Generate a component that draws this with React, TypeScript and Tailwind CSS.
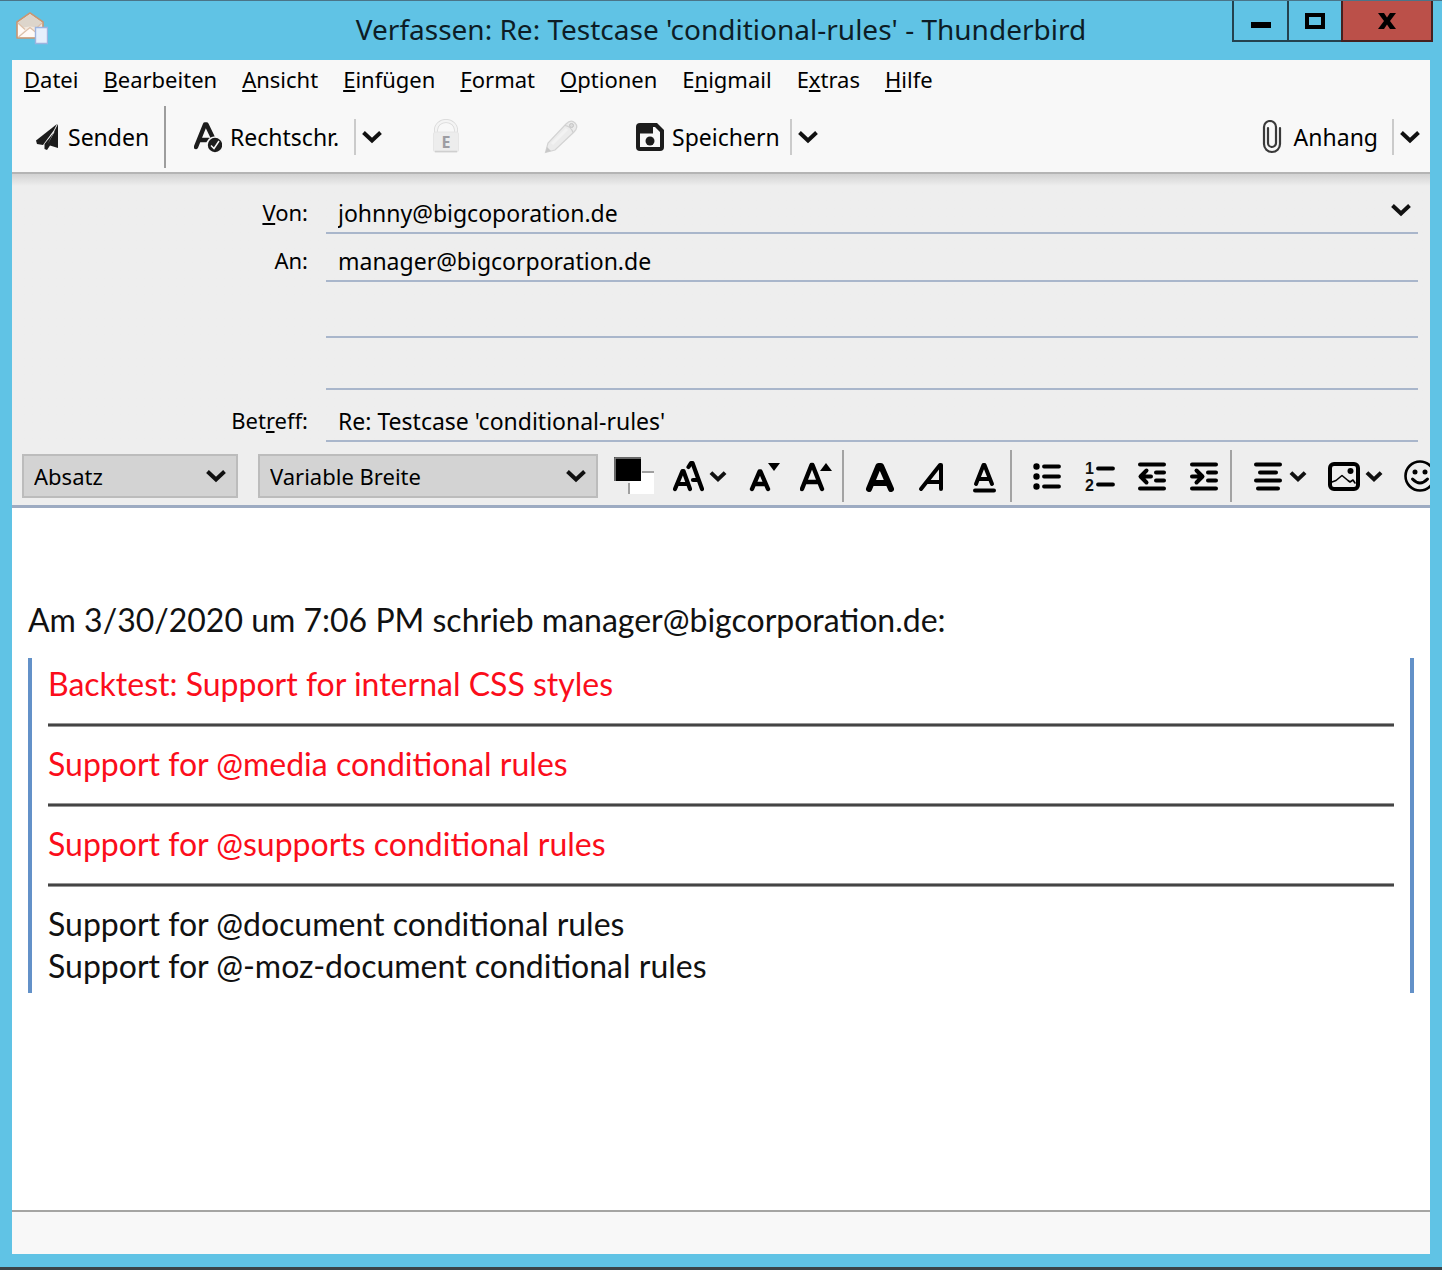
import type { ReactNode } from "react";

const uiFont = "font-['Noto_Sans','Open_Sans',sans-serif]";

function Chevron({ small = false }: { small?: boolean }) {
  return (
    <svg
      viewBox={small ? "-2 -2 24 19" : "0 0 20 16"}
      className="h-4 w-5 shrink-0"
      fill="none"
      stroke="#111"
      strokeWidth={small ? 4.8 : 4}
      aria-hidden="true"
    >
      <path d="M1.500 3.500 10 11.500 18.500 3.500" />
    </svg>
  );
}

function Glyph({ children, label }: { children: ReactNode; label: string }) {
  return (
    <button type="button" aria-label={label} className="flex shrink-0 items-center gap-1">
      {children}
    </button>
  );
}

function Pic({ children }: { children: ReactNode }) {
  return (
    <svg
      viewBox="0 0 32 36"
      className="h-9 w-8 shrink-0"
      fill="none"
      stroke="#000"
      strokeLinecap="round"
      strokeLinejoin="round"
      aria-hidden="true"
    >
      {children}
    </svg>
  );
}

const menus: [string, string, string][] = [
  ["", "D", "atei"],
  ["", "B", "earbeiten"],
  ["", "A", "nsicht"],
  ["", "E", "infügen"],
  ["", "F", "ormat"],
  ["", "O", "ptionen"],
  ["E", "n", "igmail"],
  ["E", "x", "tras"],
  ["", "H", "ilfe"],
];

function Accel({ parts }: { parts: [string, string, string] }) {
  return (
    <>
      {parts[0]}
      <span className="underline decoration-2 underline-offset-2">{parts[1]}</span>
      {parts[2]}
    </>
  );
}

function TitleBar() {
  return (
    <header className="grid h-[60px] grid-cols-[1fr_auto_1fr] border-t border-[#4a7488]">
      <div className="pt-2.5 pl-4">
        <svg viewBox="0 0 32 34" className="h-[34px] w-8" aria-hidden="true">
          <path d="M1 11 14 2l13 9v16H1z" fill="#f3e8de" stroke="#c99672" strokeWidth="1.600" strokeLinejoin="round" />
          <path d="M2 11.500 14 3l12 8.500-5 5-7-1-7 1z" fill="#ddd5cb" />
          <path d="M2 26V13l7 6zM2.500 26 14 17l11 9z" fill="#fffaf6" />
          <path d="M2 12l7 6.500M26 12l-6.500 6M2.500 26 14 16.500l6 5" fill="none" stroke="#dcc0aa" strokeWidth="1.200" />
          <path d="M19.500 16.500h12v16h-12z" fill="#e6effc" stroke="#9db4e0" strokeWidth="1.400" />
        </svg>
      </div>
      <h1 className="pt-[7px] text-[28px] leading-[42px] whitespace-nowrap text-[#0d1d26]">
        Verfassen: Re: Testcase 'conditional-rules' - Thunderbird
      </h1>
      <div className="flex h-[41px] justify-end pr-[9px]">
        <button type="button" aria-label="Minimieren" className="flex w-[57px] items-center justify-center border-2 border-t-0 border-[#24424f]">
          <svg viewBox="0 0 20 16" className="h-4 w-5"><path d="M0 9h20v6H0z" /></svg>
        </button>
        <button type="button" aria-label="Maximieren" className="flex w-[52px] items-center justify-center border-b-2 border-[#24424f]">
          <svg viewBox="0 0 20 16" className="h-4 w-5"><path d="M2 2h16v12H2z" fill="none" stroke="#000" strokeWidth="4" /></svg>
        </button>
        <button type="button" aria-label="Schließen" className="flex w-[92px] items-center justify-center border-2 border-t-0 border-[#45201f] bg-[#bb5049]">
          <svg viewBox="0 0 20 16" className="h-4 w-5"><path d="M1 0h6l3 4.500L13 0h6l-6 8 6 8h-6l-3-4.500L7 16H1l6-8z" /></svg>
        </button>
      </div>
    </header>
  );
}

function Split() {
  return <span className="h-9 w-0.5 shrink-0 bg-[#cbcbcb]" />;
}

function Toolbar() {
  return (
    <div className="flex h-[72px] items-center border-b-2 border-[#b4b4b4] pr-2.5 pl-6 text-[23px] leading-8">
      <button type="button" className="flex w-[128px] items-center gap-2">
        <svg viewBox="0 0 24 28" className="h-7 w-6" fill="#1c1c1c" aria-hidden="true">
          <path d="M21 1 0 17.500 1 21l6 1L18 7z" />
          <path d="M22 1v24l-8-2.500L11 27l-2.500-1V21L19 8l-7.500 13.500z" fillRule="evenodd" />
        </svg>
        Senden
      </button>
      <span className="h-[62px] w-0.5 shrink-0 bg-[#9d9d9d]" />
      <button type="button" className="ml-7 flex w-[154px] items-center gap-2">
        <svg viewBox="0 0 28 32" className="h-8 w-7 shrink-0" fill="none" stroke="#1c1c1c" aria-hidden="true">
          <path d="M2 26 11 3.500h1.500L19 17M6 19h9" strokeWidth="4.400" strokeLinecap="round" strokeLinejoin="round" />
          <circle cx="21" cy="24" r="8" fill="#1c1c1c" stroke="#f8f8f8" strokeWidth="1.600" />
          <path d="m17 24.500 3 3 5-7.500" stroke="#f8f8f8" strokeWidth="1.500" />
        </svg>
        Rechtschr.
      </button>
      <button type="button" aria-label="Sprache wählen" className="ml-1.5 flex items-center gap-1.5">
        <Split />
        <Chevron />
      </button>
      <button type="button" aria-label="Verschlüsseln" disabled className="ml-[50px]">
        <svg viewBox="0 0 28 36" className="h-9 w-7" aria-hidden="true">
          <path d="M4 16V11a10 9 0 0 1 20 0v5" fill="none" stroke="#d8d8d8" strokeWidth="4" />
          <path d="M4 15V11a10 9 0 0 1 20 0v5" fill="none" stroke="#f4f4f4" strokeWidth="2.400" />
          <rect x="1.500" y="13" width="25" height="20" rx="2" fill="#ededed" stroke="#e6e6e6" />
          <path d="M3 32.500h22" stroke="#cfcfcf" strokeWidth="1.500" />
          <text x="14" y="29" textAnchor="middle" fontSize="16" fontWeight="700" fill="#9d9da3" fontFamily="Noto Sans">E</text>
        </svg>
      </button>
      <button type="button" aria-label="Unterschreiben" disabled className="ml-[84px]">
        <svg viewBox="0 0 34 36" className="h-9 w-[34px]" aria-hidden="true">
          <path d="M1.500 33.500 4 24 22 5q5-5 9-1t-1 9L11 31z" fill="#ebebeb" stroke="#d3d3d3" strokeWidth="1.200" />
          <path d="M1.500 33.500 3 28l4 4z" fill="#c8c8c8" />
          <path d="M21 6.500q6 1 8 7" fill="none" stroke="#cfcfcf" strokeWidth="1.200" />
          <circle cx="27.500" cy="6.500" r="2" fill="#dcdcdc" stroke="#c4c4c4" />
          <path d="M8 25 23 10" stroke="#f2f2f2" strokeWidth="3" />
        </svg>
      </button>
      <button type="button" className="ml-[58px] flex w-[148px] items-center gap-2">
        <svg viewBox="0 0 28 28" className="h-7 w-7 shrink-0" aria-hidden="true">
          <path d="M4 0h17l7 7v17q0 4-4 4H4q-4 0-4-4V4q0-4 4-4z" fill="#1c1c1c" />
          <path d="M4 10.500h13V4h2l5 5v15H4z" fill="#f8f8f8" />
          <circle cx="14" cy="18" r="4.500" fill="#1c1c1c" />
        </svg>
        Speichern
      </button>
      <button type="button" aria-label="Speicheroptionen" className="ml-1.5 flex items-center gap-1.5">
        <Split />
        <Chevron />
      </button>
      <button type="button" className="ml-auto flex items-center gap-3">
        <svg viewBox="0 0 20 34" className="h-[34px] w-5" fill="none" stroke="#3a3a3a" strokeWidth="2.200" strokeLinecap="round" aria-hidden="true">
          <path d="M14 10v13a3.500 3.500 0 0 1-8 0V8M18 8v16a8 8 0 0 1-16 0V7a5.500 5.500 0 0 1 12 0v4" />
        </svg>
        Anhang
      </button>
      <button type="button" aria-label="Anhangoptionen" className="ml-3.5 flex items-center gap-1.5">
        <Split />
        <Chevron />
      </button>
    </div>
  );
}

const field =
  "h-10 w-full min-w-0 appearance-none self-end rounded-none border-b-2 border-[#a9b6cb] bg-transparent pl-3 text-[23px] leading-8 text-black outline-none";
const labelCls = "flex h-10 items-center justify-end self-end pb-1 text-[22px]";

function Addressing() {
  return (
    <div className="grid grid-cols-[296px_1fr] grid-rows-[60px_48px_56px_52px_52px] gap-x-[18px] bg-linear-to-b from-[#d2d2d2] to-[#eeeeee] to-[12px] pr-3">
      <label htmlFor="from" className={labelCls}>
        <span><Accel parts={["", "V", "on:"]} /></span>
      </label>
      <div className="grid self-end">
        <select id="from" className={field + " col-start-1 row-start-1"}>
          <option>johnny@bigcoporation.de</option>
        </select>
        <span className="pointer-events-none col-start-1 row-start-1 mr-[7px] self-center justify-self-end pb-2">
          <Chevron />
        </span>
      </div>
      <label htmlFor="to" className={labelCls}>An:</label>
      <input id="to" className={field} defaultValue="manager@bigcorporation.de" />
      <span />
      <input aria-label="Empfänger 2" className={field} />
      <span />
      <input aria-label="Empfänger 3" className={field} />
      <label htmlFor="subject" className={labelCls}>
        <span><Accel parts={["Bet", "r", "eff:"]} /></span>
      </label>
      <input id="subject" className={field} defaultValue="Re: Testcase 'conditional-rules'" />
    </div>
  );
}

function Picker({ label, value, width }: { label: string; value: string; width: string }) {
  return (
    <div className={"grid shrink-0 items-center " + width}>
      <select
        aria-label={label}
        className="col-start-1 row-start-1 h-11 w-full appearance-none rounded-none border-2 border-[#bcbcbc] bg-[#d3d3d3] pl-2.5 text-[22px] leading-8 text-black"
      >
        <option>{value}</option>
      </select>
      <span className="pointer-events-none col-start-1 row-start-1 mr-3 justify-self-end">
        <Chevron />
      </span>
    </div>
  );
}

function Rule() {
  return <span className="mr-5 ml-2.5 h-[52px] w-0.5 shrink-0 bg-[#a3a3a3]" />;
}

function FormatBar() {
  return (
    <div className="flex h-[66px] items-center overflow-hidden border-b-[3px] border-[#9dabc2] bg-[#eeeeee] pt-[5px] pl-2.5">
      <div className="flex shrink-0 gap-5">
        <Picker label="Absatzformat" value="Absatz" width="w-[216px]" />
        <Picker label="Schriftart" value="Variable Breite" width="w-[340px]" />
      </div>
      <div className="ml-3.5 flex shrink-0 items-center gap-5">
        <Glyph label="Textfarbe">
          <svg viewBox="0 0 40 40" className="h-10 w-10 overflow-visible" aria-hidden="true">
            <path d="M18 17h24v21H18z" fill="#fff" />
            <path d="M30 16h12M17 27v11" stroke="#a0a0a0" strokeWidth="2" />
            <path d="M2 1h27v24H2z" fill="#000" />
            <path d="M3 25V2h26" fill="none" stroke="#8b8b8b" strokeWidth="1.500" />
          </svg>
        </Glyph>
        <Glyph label="Schriftgröße">
          <Pic>
            <path d="M3 31 10.500 13h1L18 31M6 26h9" strokeWidth="4.200" />
            <path d="m16.500 9 2.500-4h1.500L30 31M21 22h5" strokeWidth="4.200" />
          </Pic>
          <Chevron small />
        </Glyph>
        <Glyph label="Schrift verkleinern">
          <Pic>
            <path d="M4 31 11.500 13.500h1L20 31M7 26h10" strokeWidth="4.400" />
            <path d="M20 5h12l-6 8z" fill="#000" stroke="none" />
          </Pic>
        </Glyph>
        <Glyph label="Schrift vergrößern">
          <Pic>
            <path d="M2 31 11.500 7h1L22 31M5 24h14" strokeWidth="4.400" />
            <path d="M20 13h12l-6-8z" fill="#000" stroke="none" />
          </Pic>
        </Glyph>
      </div>
      <Rule />
      <div className="flex shrink-0 items-center gap-5">
        <Glyph label="Fett">
          <Pic><path d="M5 31 14.500 8h2.500L27 31M8 25h16" strokeWidth="6" /></Pic>
        </Glyph>
        <Glyph label="Kursiv">
          <Pic><path d="M5 31 24 7h1v24M11 24h13" strokeWidth="4" /></Pic>
        </Glyph>
        <Glyph label="Unterstrichen">
          <Pic>
            <path d="M8 26 15.500 7h1L24 26M10 21h12" strokeWidth="4" />
            <path d="M7 32.500h19" strokeWidth="4" />
          </Pic>
        </Glyph>
      </div>
      <Rule />
      <div className="flex shrink-0 items-center gap-5">
        <Glyph label="Aufzählung">
          <Pic>
            <path d="M12 8.500h15M12 18.500h15M12 28.500h15" strokeWidth="3.800" />
            <path d="M4.500 8.500h.01M4.500 18.500h.01M4.500 28.500h.01" strokeWidth="6.400" />
          </Pic>
        </Glyph>
        <Glyph label="Nummerierung">
          <Pic>
            <path d="M14 10.500h15M14 26.500h15" strokeWidth="3.800" />
            <g fill="#111" stroke="none" fontFamily="Liberation Sans" fontSize="16" fontWeight="700">
              <text x="1" y="16">1</text>
              <text x="1" y="33">2</text>
            </g>
          </Pic>
        </Glyph>
        <Glyph label="Einzug verkleinern">
          <Pic>
            <path d="M4 6.500h24M20 14.500h8M20 22.500h8M4 30.500h24" strokeWidth="4" />
            <path d="M15 18.500H5M10.500 12.500 4.500 18.500l6 6" strokeWidth="4" />
          </Pic>
        </Glyph>
        <Glyph label="Einzug vergrößern">
          <Pic>
            <path d="M4 6.500h24M20 14.500h8M20 22.500h8M4 30.500h24" strokeWidth="4" />
            <path d="M4 18.500h10M8.500 12.500l6 6-6 6" strokeWidth="4" />
          </Pic>
        </Glyph>
      </div>
      <Rule />
      <div className="flex shrink-0 items-center gap-5">
        <Glyph label="Ausrichtung">
          <Pic><path d="M4 6.500h24M8 14.500h16M4 22.500h24M6 30.500h20" strokeWidth="4" /></Pic>
          <Chevron small />
        </Glyph>
        <Glyph label="Einfügen">
          <Pic>
            <rect x="2" y="6" width="28" height="25" rx="4" strokeWidth="4" />
            <path d="m4 24 4-1.500 6-5 6 5 2 1.500 3-2 2 3" strokeWidth="1.600" />
            <circle cx="22.500" cy="13" r="3" fill="#000" stroke="none" />
          </Pic>
          <Chevron small />
        </Glyph>
        <Glyph label="Smiley">
          <Pic>
            <circle cx="16" cy="18" r="14.500" strokeWidth="2.600" />
            <path d="M8.500 21q7.500 8 15 0" strokeWidth="3" />
            <path d="M11 14h.01M21 14h.01" strokeWidth="5" />
          </Pic>
        </Glyph>
      </div>
    </div>
  );
}

const redLines = [
  "Backtest: Support for internal CSS styles",
  "Support for @media conditional rules",
  "Support for @supports conditional rules",
];

function Message() {
  return (
    <main className="flex-1 bg-white px-4 pt-[91px] font-['Lato','Open_Sans',sans-serif] text-[32px] leading-[42px] text-[#111]">
      <p>Am 3/30/2020 um 7:06 PM schrieb manager@bigcorporation.de:</p>
      <blockquote className="mt-[17px] border-x-4 border-[#6391c8] px-4 pt-[5px] pb-1.5">
        {redLines.map((line) => (
          <div key={line}>
            <p className="text-[#fb0d1b]">{line}</p>
            <hr className="mt-[18px] mb-4 h-1 border-y border-[#969696] bg-[#444]" />
          </div>
        ))}
        <p>Support for @document conditional rules</p>
        <p>Support for @-moz-document conditional rules</p>
      </blockquote>
    </main>
  );
}

export default function App() {
  return (
    <div className={"flex min-h-screen flex-col border-b-[3px] border-[#3c4448] bg-[#60c3e5] text-black " + uiFont}>
      <TitleBar />
      <div className="mx-3 mb-[13px] flex flex-1 flex-col bg-[#f8f8f8]">
        <nav className="flex h-[42px] items-center gap-[25px] pb-1 pl-3 text-[22px] leading-8">
          {menus.map((m) => (
            <button type="button" key={m.join("")}>
              <Accel parts={m} />
            </button>
          ))}
        </nav>
        <Toolbar />
        <Addressing />
        <FormatBar />
        <Message />
        <footer className="h-11 border-t-2 border-[#a5a5a3]" />
      </div>
    </div>
  );
}
